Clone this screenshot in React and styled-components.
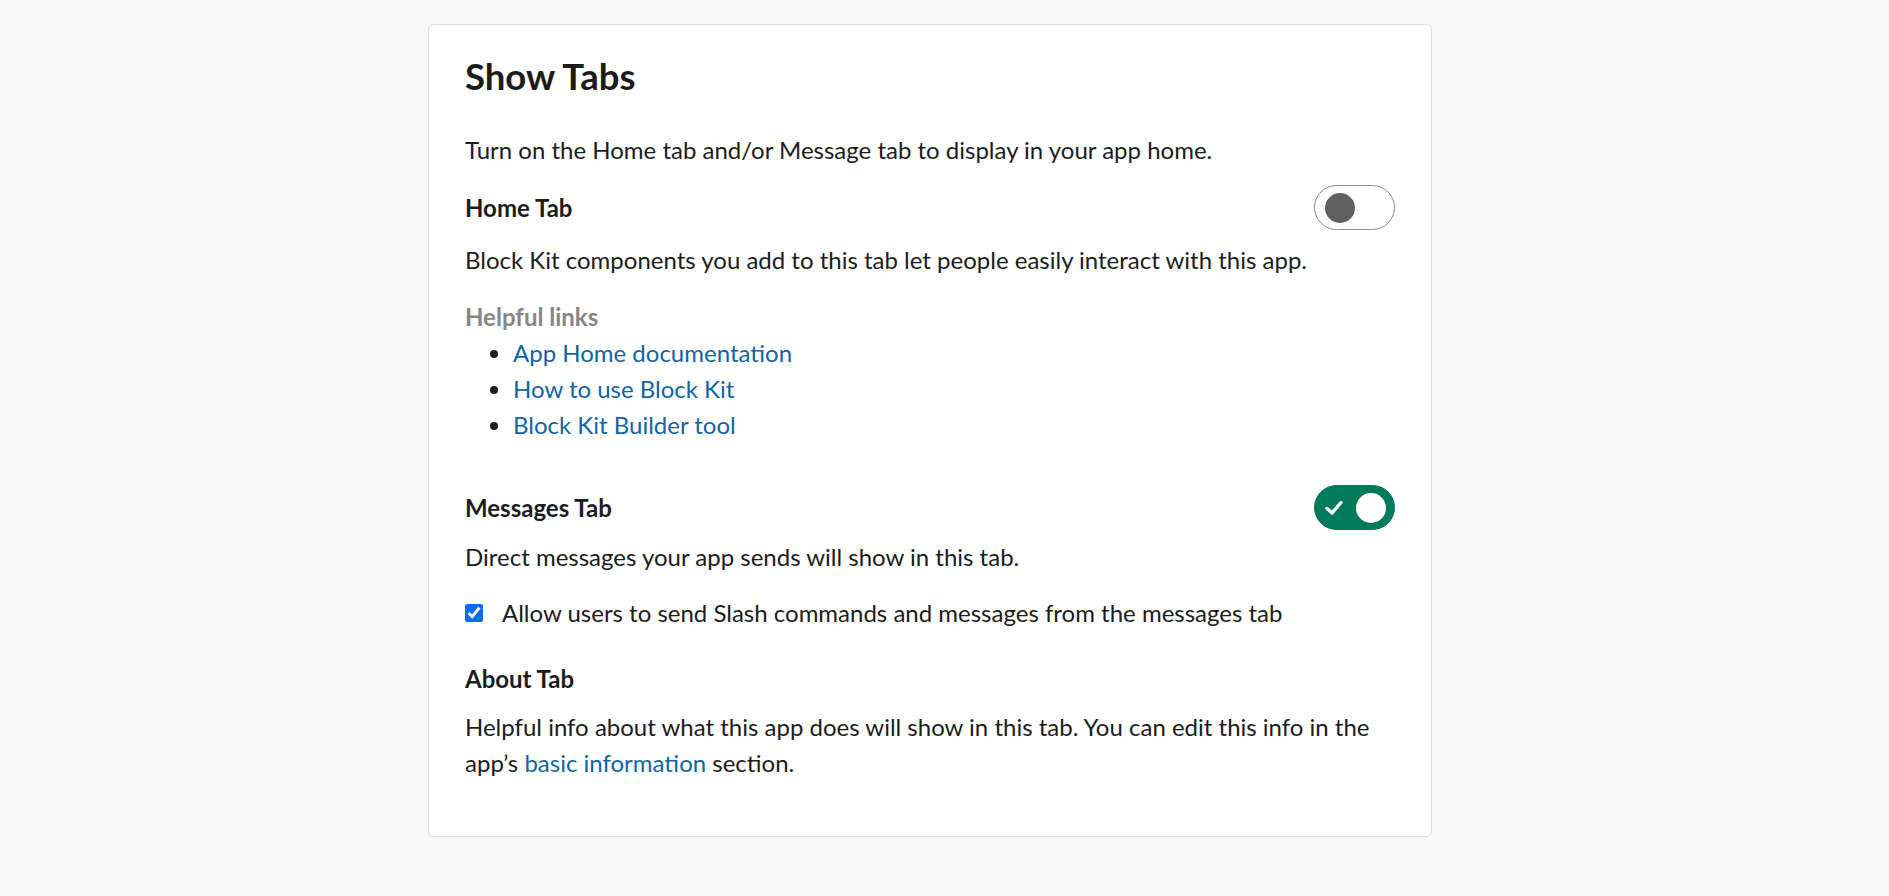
import React from "react";
import styled, { createGlobalStyle } from "styled-components";

const Global = createGlobalStyle`
  html, body { margin: 0; padding: 0; background: #f8f8f8; }
  body { font-family: Lato, "Noto Sans", sans-serif; color: #1d1c1d; }
`;

const Page = styled.div`
  padding: 24px 0 40px 428px;
`;

const Card = styled.section`
  box-sizing: border-box;
  width: 1004px;
  background: #fff;
  border: 1px solid #dddddd;
  border-radius: 6px;
  padding: 29px 36px 55px 36px;
`;

const Title = styled.h2`
  margin: 0 0 34px;
  font-size: 36.5px;
  line-height: 44px;
  font-weight: 700;
`;

const Text = styled.p`
  margin: ${(p) => p.$mt || 0}px 0 0;
  font-size: 24px;
  line-height: 36px;
`;

const HeadRow = styled.div`
  display: flex;
  justify-content: space-between;
  align-items: center;
  margin-top: ${(p) => p.$mt}px;
`;

const Heading = styled.h3`
  margin: 0;
  font-size: 24px;
  line-height: 36px;
  font-weight: 700;
`;

const Toggle = styled.div`
  box-sizing: border-box;
  width: 81px;
  height: 45px;
  border-radius: 23px;
  display: flex;
  align-items: center;
  justify-content: space-between;
  padding: 0 8px 0 10px;
  background: ${(p) => (p.$on ? "#007a5a" : "#fff")};
  border: 1px solid ${(p) => (p.$on ? "#007a5a" : "#8d8d8d")};
`;

const Knob = styled.span`
  width: 30px;
  height: 30px;
  border-radius: 50%;
  background: ${(p) => (p.$on ? "#fff" : "#616061")};
  margin-left: ${(p) => (p.$on ? "auto" : "0")};
`;

const SubLabel = styled.div`
  margin-top: 21px;
  font-size: 24px;
  line-height: 36px;
  font-weight: 700;
  color: #868686;
`;

const List = styled.ul`
  margin: 0;
  padding-left: 48px;
  font-size: 24px;
  line-height: 36px;
`;

const Link = styled.a`
  color: #1264a3;
  text-decoration: none;
`;

const CheckRow = styled.label`
  display: flex;
  align-items: center;
  gap: 19px;
  margin-top: 20px;
  font-size: 24px;
  line-height: 36px;
`;

const Check = styled.input`
  width: 18px;
  height: 18px;
  margin: 0;
  accent-color: #0b6cf0;
`;

export default function App() {
  return (
    <>
      <Global />
      <Page>
        <Card>
          <Title>Show Tabs</Title>
          <Text>Turn on the Home tab and/or Message tab to display in your app home.</Text>
          <HeadRow $mt={17}>
            <Heading>Home Tab</Heading>
            <Toggle>
              <Knob />
            </Toggle>
          </HeadRow>
          <Text $mt={12}>Block Kit components you add to this tab let people easily interact with this app.</Text>
          <SubLabel>Helpful links</SubLabel>
          <List>
            <li><Link href="#">App Home documentation</Link></li>
            <li><Link href="#">How to use Block Kit</Link></li>
            <li><Link href="#">Block Kit Builder tool</Link></li>
          </List>
          <HeadRow $mt={42}>
            <Heading>Messages Tab</Heading>
            <Toggle $on>
              <svg width="18" height="16" viewBox="0 0 18 16">
                <path d="M2 8.5 L7 13 L16 2.5" fill="none" stroke="#fff" strokeWidth="3.4" strokeLinecap="round" strokeLinejoin="round" />
              </svg>
              <Knob $on />
            </Toggle>
          </HeadRow>
          <Text $mt={9}>Direct messages your app sends will show in this tab.</Text>
          <CheckRow>
            <Check type="checkbox" defaultChecked />
            Allow users to send Slash commands and messages from the messages tab
          </CheckRow>
          <HeadRow $mt={30}>
            <Heading>About Tab</Heading>
          </HeadRow>
          <Text $mt={12}>
            Helpful info about what this app does will show in this tab. You can edit this info in the app’s{" "}
            <Link href="#">basic information</Link> section.
          </Text>
        </Card>
      </Page>
    </>
  );
}
